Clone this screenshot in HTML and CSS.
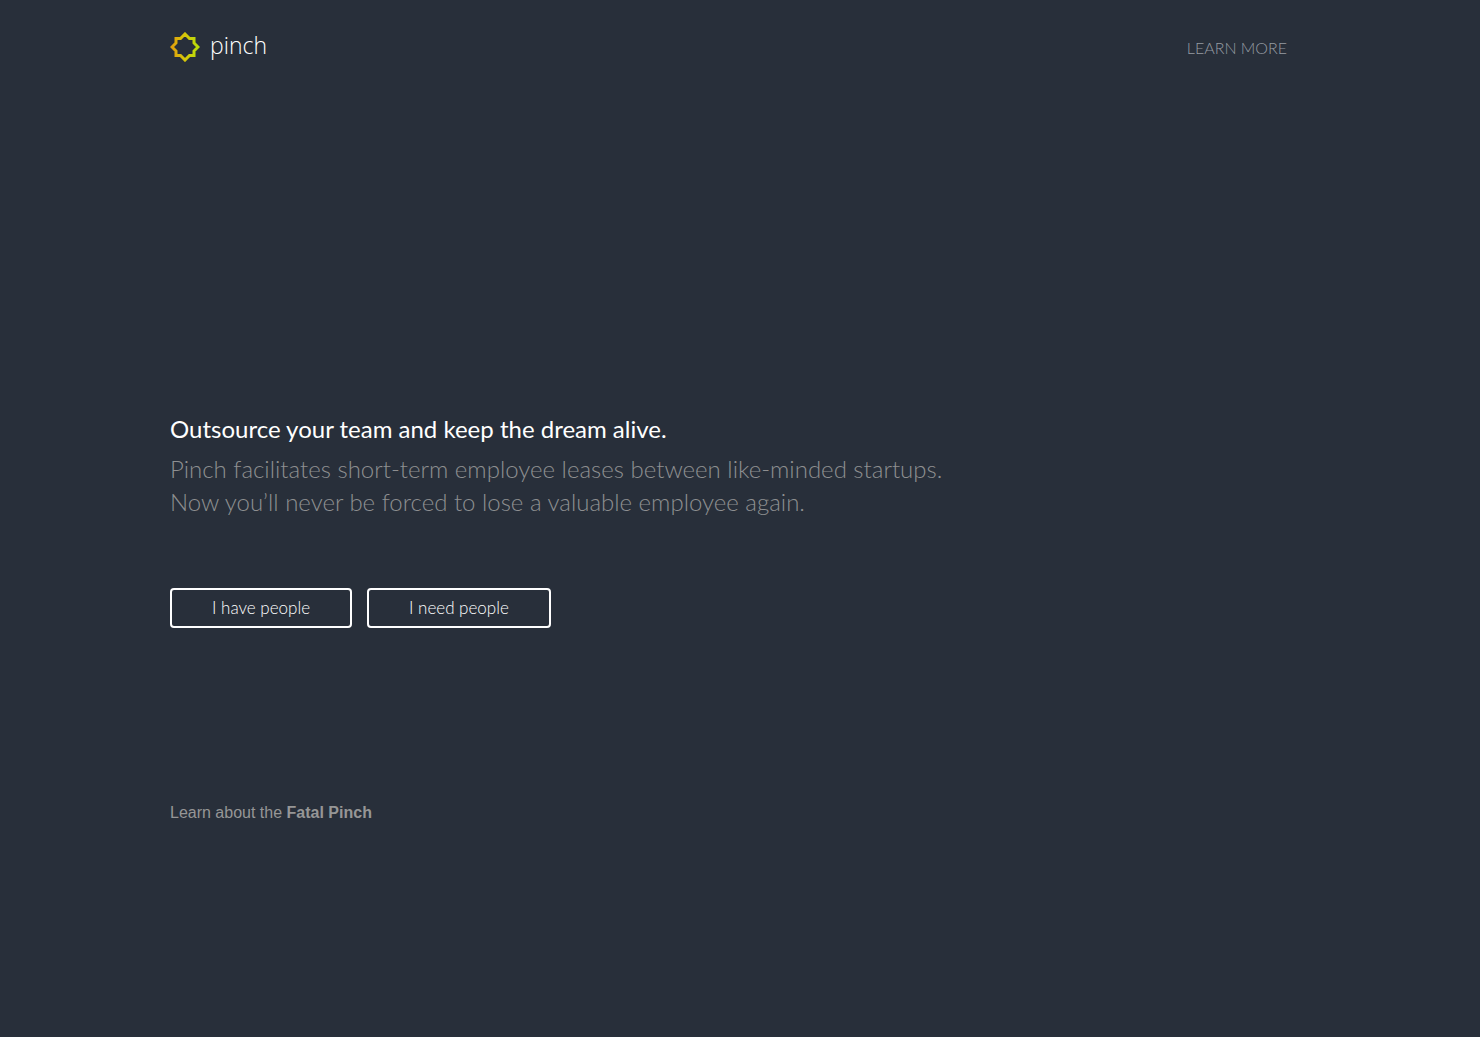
FILE: index.html
```html
<!DOCTYPE html>
<html lang="en">
<head>
    <meta charset="UTF-8">
    <meta name="viewport" content="width=device-width, initial-scale=1.0">
    <title>Pinch</title>
    <link rel="stylesheet" href="styles.css">
</head>
<body>
    <header class="container header">
        <a class="logo" href="#">
            <svg class="logo-mark" viewBox="0 0 30 30" aria-hidden="true">
                <defs>
                    <linearGradient id="sun" x1="0" y1="0" x2="1" y2="0">
                        <stop offset="0" stop-color="#e0a00c"/>
                        <stop offset="0.5" stop-color="#d6c80a"/>
                        <stop offset="1" stop-color="#b8dc0a"/>
                    </linearGradient>
                </defs>
                <path d="M15 2 L19.5 6.5 H24 V11 L28 15 L24 19 V23.5 H19.5 L15 28 L10.5 23.5 H6 V19 L2 15 L6 11 V6.5 H10.5 Z" fill="none" stroke="url(#sun)" stroke-width="3"/>
            </svg>
            <span class="logo-name">pinch</span>
        </a>
        <nav class="nav">
            <a href="#learn-more">Learn more</a>
        </nav>
    </header>

    <main class="container hero">
        <h1>Outsource your team and keep the dream alive.</h1>
        <p class="lead">Pinch facilitates short-term employee leases between like-minded startups.<br>Now you’ll never be forced to lose a valuable employee again.</p>
        <div class="actions">
            <button type="button">I have people</button>
            <button type="button">I need people</button>
        </div>
        <p class="more">Learn about the <a href="#fatal-pinch">Fatal Pinch</a></p>
    </main>
</body>
</html>
```
FILE: styles.css
```css
* {
    box-sizing: border-box;
}
body {
    margin: 0;
    min-height: 100vh;
    background-color: #282f3a;
    color: #fff;
    font-family: Lato, sans-serif;
}
a {
    color: inherit;
    text-decoration: none;
}
.container {
    max-width: 1180px;
    margin: 0 auto;
    padding: 0 20px;
}
.header {
    display: flex;
    justify-content: space-between;
    align-items: flex-start;
    padding-top: 32px;
}
.logo {
    display: flex;
    align-items: flex-start;
    gap: 10px;
}
.logo-mark {
    width: 30px;
    height: 30px;
}
.logo-name {
    font-family: "Open Sans", sans-serif;
    font-size: 23px;
    font-weight: 300;
    line-height: 26px;
}
.nav {
    padding-right: 23px;
    color: #969ba2;
    font-size: 16px;
    font-weight: 300;
    line-height: 32px;
    text-transform: uppercase;
}
.hero {
    padding-top: 348px;
}
h1 {
    margin: 0 0 6px;
    font-size: 24px;
    font-weight: 400;
    line-height: 34px;
}
.lead {
    margin: 0 0 70px;
    color: #8e8f91;
    font-size: 24px;
    font-weight: 300;
    line-height: 33px;
}
.actions {
    display: flex;
    gap: 15px;
}
button {
    height: 40px;
    padding: 0 40px 2px;
    background: none;
    border: 2px solid #fff;
    border-radius: 4px;
    color: #fff;
    font-family: inherit;
    font-size: 17px;
    font-weight: 300;
    cursor: pointer;
}
button:hover {
    background-color: #fff;
    color: #282f3a;
}
.more {
    margin: 172px 0 0;
    color: #969696;
    font-family: "Liberation Sans", Arial, sans-serif;
    font-size: 16px;
    line-height: 26px;
}
.more a {
    font-weight: 700;
}
```
